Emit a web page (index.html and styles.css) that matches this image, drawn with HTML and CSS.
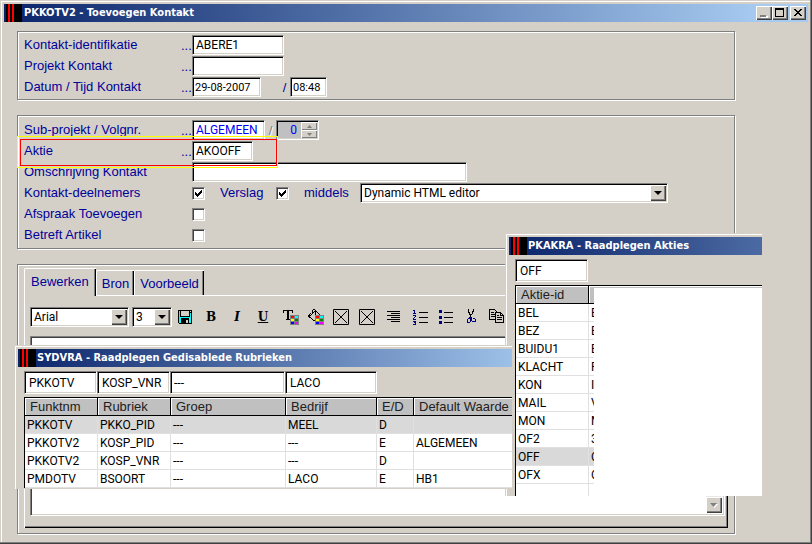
FILE: index.html
```html
<!DOCTYPE html>
<html lang="nl">
<head>
    <meta charset="UTF-8">
    <meta name="viewport" content="width=device-width, initial-scale=1.0">
    <title>PKKOTV2 - Toevoegen Kontakt</title>
    <link rel="stylesheet" href="styles.css">
</head>
<body>
    <div class="window">
        <div class="titlebar">
            <span class="app-icon"></span>
            <span class="title">PKKOTV2 - Toevoegen Kontakt</span>
            <div class="window-buttons">
                <button type="button" class="win-btn" aria-label="Minimize">
                    <svg width="12" height="11" shape-rendering="crispEdges"><path fill="#fff" d="M3 9h7v2H3z"/><path fill="#808080" d="M2 8h6v2H2z"/></svg>
                </button>
                <button type="button" class="win-btn" aria-label="Maximize">
                    <svg width="12" height="11" shape-rendering="crispEdges"><path d="M1 1h9v9H1zM2 3v6h7V3z" fill-rule="evenodd"/></svg>
                </button>
                <button type="button" class="win-btn close" aria-label="Close">
                    <svg width="12" height="11" shape-rendering="crispEdges"><path d="M2 2h2v1h1v1h2V3h1V2h2v1H9v1H8v1H7v1h1v1h1v1h1v1H8V8H7V7H5v1H4v1H2V8h1V7h1V6h1V5H4V4H3V3H2z"/></svg>
                </button>
            </div>
        </div>

        <form class="content">
            <!-- Contact -->
            <div class="group">
                <div class="row">
                    <label for="kontakt">Kontakt-identifikatie</label><span class="dots">...</span>
                    <input type="text" id="kontakt" class="field w-id" value="ABERE1">
                </div>
                <div class="row">
                    <label for="projekt">Projekt Kontakt</label><span class="dots">...</span>
                    <input type="text" id="projekt" class="field w-id">
                </div>
                <div class="row">
                    <label for="datum">Datum / Tijd Kontakt</label><span class="dots">...</span>
                    <input type="text" id="datum" class="field small w-date" value="29-08-2007">
                    <span class="slash wide">/</span>
                    <input type="text" class="field small w-time" value="08:48" aria-label="Tijd">
                </div>
            </div>

            <!-- Action -->
            <div class="group action">
                <div class="row">
                    <label for="subprojekt">Sub-projekt / Volgnr.</label><span class="dots">...</span>
                    <input type="text" id="subprojekt" class="field blue w-sub" value="ALGEMEEN">
                    <span class="slash disabled">/</span>
                    <span class="spinner">
                        <input type="text" class="spin-value" value="0" aria-label="Volgnr.">
                        <span class="spin-buttons">
                            <button type="button" class="spin-btn" aria-label="Omhoog"><svg width="5" height="3"><path fill="#808080" d="M0 3h5L2.5 0z"/></svg></button>
                            <button type="button" class="spin-btn" aria-label="Omlaag"><svg width="5" height="3"><path fill="#808080" d="M0 0h5L2.5 3z"/></svg></button>
                        </span>
                    </span>
                </div>
                <div class="row marked">
                    <label for="aktie">Aktie</label><span class="dots">...</span>
                    <input type="text" id="aktie" class="field w-aktie" value="AKOOFF">
                    <span class="marker"></span>
                </div>
                <div class="row">
                    <label for="omschrijving">Omschrijving Kontakt</label><span class="dots"></span>
                    <input type="text" id="omschrijving" class="field w-desc">
                </div>
                <div class="row">
                    <label for="deelnemers">Kontakt-deelnemers</label><span class="dots"></span>
                    <input type="checkbox" id="deelnemers" class="check" checked>
                    <label for="verslag" class="inline">Verslag</label>
                    <input type="checkbox" id="verslag" class="check" checked>
                    <label for="middels" class="inline">middels</label>
                    <span class="combo w-editor">
                        <select id="middels"><option>Dynamic HTML editor</option></select>
                        <span class="arrow"></span>
                    </span>
                </div>
                <div class="row">
                    <label for="afspraak">Afspraak Toevoegen</label><span class="dots"></span>
                    <input type="checkbox" id="afspraak" class="check">
                </div>
                <div class="row">
                    <label for="artikel">Betreft Artikel</label><span class="dots"></span>
                    <input type="checkbox" id="artikel" class="check">
                </div>
            </div>

            <!-- HTML editor -->
            <div class="group editor-group">
                <div class="tabs">
                    <button type="button" class="tab active">Bewerken</button>
                    <button type="button" class="tab">Bron</button>
                    <button type="button" class="tab">Voorbeeld</button>
                </div>
                <div class="tab-page">
                    <div class="toolbar">
                        <span class="combo w-font">
                            <select aria-label="Lettertype"><option>Arial</option></select>
                            <span class="arrow"></span>
                        </span>
                        <span class="combo w-size">
                            <select aria-label="Grootte"><option>3</option></select>
                            <span class="arrow"></span>
                        </span>
                        <div class="tools">
                            <button type="button" class="tool" aria-label="Opslaan">
                                <svg width="16" height="16" shape-rendering="crispEdges"><path d="M1 1h14v14H2v-1H1z"/><path fill="#0ff" d="M2 2h1v12H2zM13 4h1v10h-1zM3 8h10v1H3zM3 9h1v5H3zM12 9h1v5h-1z"/><path fill="#d4d0c8" d="M4 2h8v5H4zM13 2h1v1h-1zM9 11h2v3H9z"/></svg>
                            </button>
                            <button type="button" class="tool letter" aria-label="Vet">B</button>
                            <button type="button" class="tool letter italic" aria-label="Cursief">I</button>
                            <button type="button" class="tool letter underline" aria-label="Onderstrepen">U</button>
                            <button type="button" class="tool" aria-label="Tekstkleur">
                                <svg width="18" height="16" shape-rendering="crispEdges"><path d="M2 1h10v3h-1V2H8v8h1v1H5v-1h1V2H3v2H2z"/><path fill="#808080" d="M9 6h9v10H9z"/><path fill="red" d="M10 7h3v2h-3z"/><path fill="#0ff" d="M14 7h3v2h-3z"/><path fill="#ff0" d="M10 10h3v2h-3z"/><path fill="green" d="M14 10h3v2h-3z"/><path fill="#00f" d="M10 13h3v2h-3z"/><path fill="#f0f" d="M14 13h3v2h-3z"/></svg>
                            </button>
                            <button type="button" class="tool" aria-label="Achtergrondkleur">
                                <svg width="18" height="16" shape-rendering="crispEdges"><path d="M6 0h2v1H6zM5 1h1v3H5zM8 1h1v5H8zM7 2h1v1H7zM6 3h1v1H6zM5 4h1v1H5zM4 5h1v1H4zM3 6h1v1H3zM2 5h1v4H2zM3 4h1v1H3zM1 6h1v2H1zM3 8h1v1H3zM4 9h1v1H4zM5 10h1v1H5zM6 11h2v1H6zM8 10h1v1H8zM9 2h1v1H9zM10 3h1v1h-1zM11 4h1v1h-1zM12 5h1v1h-1z"/><path fill="#808080" d="M8 6h9v10H8z"/><path fill="red" d="M9 7h3v2H9z"/><path fill="#0ff" d="M13 7h3v2h-3z"/><path fill="#ff0" d="M9 10h3v2H9z"/><path fill="green" d="M13 10h3v2h-3z"/><path fill="#00f" d="M9 13h3v2H9z"/><path fill="#f0f" d="M13 13h3v2h-3z"/></svg>
                            </button>
                            <button type="button" class="tool" aria-label="Afbeelding">
                                <svg width="16" height="16"><path fill="none" stroke="#000" d="M.5.5h15v15H.5zM2 2l12 12M14 2L2 14"/></svg>
                            </button>
                            <button type="button" class="tool" aria-label="Koppeling">
                                <svg width="16" height="16"><path fill="none" stroke="#000" d="M.5.5h15v15H.5zM2 2l12 12M14 2L2 14"/></svg>
                            </button>
                            <button type="button" class="tool" aria-label="Inspringen">
                                <svg width="16" height="16" shape-rendering="crispEdges"><path d="M2 2h13v1H2zM6 4h9v1H6zM2 6h13v1H2zM6 8h9v1H6zM2 10h13v1H2zM6 12h9v1H6z"/></svg>
                            </button>
                            <button type="button" class="tool" aria-label="Nummering">
                                <svg width="18" height="16" shape-rendering="crispEdges"><path d="M8 3h9v1H8zM8 8h9v1H8zM8 13h9v1H8z"/><path fill="#000080" d="M3 1h1v3h1v1H2V4h1V2H2V1zM2 6h3v2H4v1H3v1h2v1H2V9h1V8h1V7H2zM2 12h3v4H2v-1h2v-1H3v-1H2z"/></svg>
                            </button>
                            <button type="button" class="tool" aria-label="Opsomming">
                                <svg width="18" height="16" shape-rendering="crispEdges"><path d="M7 3h9v1H7zM7 8h9v1H7zM7 13h9v1H7z"/><path fill="#000080" d="M2 1h3v3H2zM2 7h3v3H2zM2 12h3v3H2z"/></svg>
                            </button>
                            <button type="button" class="tool" aria-label="Knippen">
                                <svg width="16" height="16" shape-rendering="crispEdges"><path d="M5 0h1v3h1v2h1v1h1V5h1V3h1V0h-1v2H9v3H8v3h1v1H7V6H6V4H5z"/><path fill="none" stroke="#000080" d="M7.500 8.500v4l-1 1h-2v-3l1-1zM8.500 8.500v3l1 1h3v-2l-1-1h-2"/></svg>
                            </button>
                            <button type="button" class="tool" aria-label="Kopiëren">
                                <svg width="16" height="16" shape-rendering="crispEdges"><path fill="#d4d0c8" stroke="#000" d="M.5.5h5l3 3v7h-8z"/><path stroke="#000" d="M2 3.500h3M2 5.500h5M2 7.500h5"/><path fill="#d4d0c8" stroke="#000" d="M6.500 3.500h5l3 3v7h-8zM11.500 3.500v3h3"/><path stroke="#000" d="M8 6.500h2M8 8.500h5M8 10.500h5"/></svg>
                            </button>
                        </div>
                    </div>
                    <div class="editor">
                        <textarea aria-label="Tekst"></textarea>
                        <div class="scrollbar">
                            <button type="button" class="scroll-btn" aria-label="Omlaag"><svg width="8" height="5"><path fill="#fff" d="M1 1h7L4.500 5z"/><path fill="#808080" d="M0 0h7L3.500 4z"/></svg></button>
                        </div>
                    </div>
                </div>
            </div>
        </form>

        <!-- Lookup window: actions -->
        <div class="popup akties">
            <div class="titlebar">
                <span class="app-icon"></span>
                <span class="title">PKAKRA - Raadplegen Akties</span>
            </div>
            <div class="filters">
                <input type="text" class="field filter w-col" value="OFF" aria-label="Aktie-id">
            </div>
            <table class="grid">
                <colgroup><col class="w-col"><col></colgroup>
                <thead><tr><th>Aktie-id</th><th></th></tr></thead>
                <tbody>
                    <tr><td>BEL</td><td>E</td></tr>
                    <tr><td>BEZ</td><td>E</td></tr>
                    <tr><td>BUIDU1</td><td>E</td></tr>
                    <tr><td>KLACHT</td><td>F</td></tr>
                    <tr><td>KON</td><td>I</td></tr>
                    <tr><td>MAIL</td><td>V</td></tr>
                    <tr><td>MON</td><td>M</td></tr>
                    <tr><td>OF2</td><td>3</td></tr>
                    <tr class="selected"><td>OFF</td><td>O</td></tr>
                    <tr><td>OFX</td><td>O</td></tr>
                    <tr><td></td><td></td></tr>
                </tbody>
            </table>
            <div class="blank"></div>
        </div>

        <!-- Lookup window: disabled fields -->
        <div class="popup rubrieken">
            <div class="titlebar">
                <span class="app-icon"></span>
                <span class="title">SYDVRA - Raadplegen Gedisablede Rubrieken</span>
            </div>
            <div class="filters">
                <input type="text" class="field filter w-col" value="PKKOTV" aria-label="Funktnm">
                <input type="text" class="field filter w-col" value="KOSP_VNR" aria-label="Rubriek">
                <input type="text" class="field filter tight w-groep" value="---" aria-label="Groep">
                <input type="text" class="field filter w-id" value="LACO" aria-label="Bedrijf">
            </div>
            <table class="grid">
                <colgroup><col class="w-col"><col class="w-col"><col class="w-groep"><col class="w-bedrijf"><col class="w-ed"><col></colgroup>
                <thead>
                    <tr><th>Funktnm</th><th>Rubriek</th><th>Groep</th><th>Bedrijf</th><th>E/D</th><th>Default Waarde</th></tr>
                </thead>
                <tbody>
                    <tr class="selected"><td>PKKOTV</td><td>PKKO_PID</td><td>---</td><td>MEEL</td><td>D</td><td></td></tr>
                    <tr><td>PKKOTV2</td><td>KOSP_PID</td><td>---</td><td>---</td><td>E</td><td>ALGEMEEN</td></tr>
                    <tr><td>PKKOTV2</td><td>KOSP_VNR</td><td>---</td><td>---</td><td>D</td><td></td></tr>
                    <tr><td>PMDOTV</td><td>BSOORT</td><td>---</td><td>LACO</td><td>E</td><td>HB1</td></tr>
                </tbody>
            </table>
        </div>
    </div>
</body>
</html>
```
FILE: styles.css
```css
* {
    box-sizing: border-box;
}

body {
    margin: 0;
    background-color: #d4d0c8;
    color: #000099;
    font-family: "Liberation Sans", Arial, sans-serif;
    font-size: 13px;
}

button, input, select, textarea {
    margin: 0;
    padding: 0;
    border: 0;
    border-radius: 0;
    font: inherit;
    color: #000;
    outline: none;
    appearance: none;
}

svg {
    display: block;
}

.window {
    position: relative;
    display: flex;
    flex-direction: column;
    min-height: 100vh;
    padding: 4px;
    padding-bottom: 2px;
    background: #d4d0c8;
    box-shadow: inset -1px -1px #404040, inset -2px -2px #808080, inset 1px 1px #d4d0c8, inset 2px 2px #fff;
}

/* Title bars */
.titlebar {
    display: flex;
    height: 18px;
    padding: 0 2px;
    background: linear-gradient(to right, #0a246a, #a6caf0 94%);
}

.app-icon {
    width: 16px;
    background: linear-gradient(to right, #000 2px, #f00 2px, #f00 4px, #000 4px, #000 6px, #f00 6px, #f00 8px, #000 8px);
}

.title {
    flex: 1;
    padding-left: 2px;
    color: #fff;
    font-family: "DejaVu Sans Condensed", "Open Sans", sans-serif;
    font-size: 11px;
    font-weight: bold;
    line-height: 18px;
    white-space: nowrap;
}

.window-buttons {
    display: flex;
    padding-top: 2px;
}

.win-btn, .arrow, .scroll-btn {
    display: flex;
    align-items: center;
    justify-content: center;
    background: #d4d0c8;
    box-shadow: inset 1px 1px #fff, inset -1px -1px #404040, inset -2px -2px #808080;
}

.win-btn {
    width: 16px;
    height: 14px;
    padding: 0 2px 1px 1px;
}

.win-btn.close {
    margin-left: 2px;
}

/* Form */
.content {
    display: flex;
    flex: 1;
    flex-direction: column;
    gap: 15px;
    padding: 9px 73px 8px 13px;
}

.group {
    display: flex;
    flex-direction: column;
    gap: 1px;
    padding: 3px 6px 2px;
    border: 1px solid #808080;
    box-shadow: inset 1px 1px #fff, 1px 1px #fff;
}

.group.action {
    padding-top: 4px;
    padding-bottom: 3px;
}

.row {
    display: flex;
    align-items: center;
    height: 20px;
}

.row label {
    width: 157px;
    line-height: 20px;
}

.row label.inline {
    width: 71px;
    padding-left: 15px;
}

.dots {
    width: 11px;
}

.field {
    height: 20px;
    padding: 0 3px;
    border: 1px solid;
    border-color: #808080 #fff #fff #808080;
    background: #fff;
    box-shadow: inset 1px 1px #000, inset -1px -1px #d4d0c8;
    font-family: Roboto, sans-serif;
    font-size: 12px;
}

.field.small {
    padding: 0 2px;
    font-size: 11px;
}

.field.blue {
    color: #0000ff;
}

.w-id { width: 92px; }
.w-date { width: 69px; }
.w-time { width: 37px; }
.w-sub { width: 73px; }
.w-aktie { width: 61px; }
.w-desc { width: 275px; }
.w-editor { width: 308px; }
.w-font { width: 99px; }
.w-size { width: 40px; }
.w-col { width: 73px; }
.w-groep { width: 115px; }
.w-bedrijf { width: 91px; }
.w-ed { width: 37px; }

.slash {
    width: 11px;
    text-align: center;
}

.slash.wide {
    width: 29px;
    padding-left: 18px;
}

.slash.disabled {
    color: #808080;
    text-shadow: 1px 1px #fff;
}

.spinner {
    display: flex;
    width: 43px;
    height: 20px;
    padding: 1px;
    border: 1px solid;
    border-color: #808080 #fff #fff #808080;
    background: #c0c0c0;
    box-shadow: inset 1px 1px #000, inset -1px -1px #d4d0c8;
}

.spin-value {
    flex: 1;
    min-width: 0;
    padding-right: 4px;
    background: none;
    color: #0000ff;
    font-family: Roboto, sans-serif;
    font-size: 12px;
    text-align: right;
}

.spin-buttons {
    display: flex;
    flex-direction: column;
    width: 16px;
}

.spin-btn {
    display: flex;
    flex: 1;
    align-items: center;
    justify-content: center;
    background: #d4d0c8;
    box-shadow: inset 1px 1px #fff, inset -1px -1px #808080;
}

.check {
    width: 13px;
    height: 13px;
    border: 1px solid;
    border-color: #808080 #fff #fff #808080;
    background: #fff;
    box-shadow: inset 1px 1px #404040, inset -1px -1px #d4d0c8;
}

.check:checked {
    background: #fff url("data:image/svg+xml,%3Csvg xmlns='http://www.w3.org/2000/svg' width='7' height='7' shape-rendering='crispEdges'%3E%3Cpath d='M0 2h1v1h1v1h1V3h1V2h1V1h1V0h1v3H6v1H5v1H4v1H3v1H2V6H1V5H0z'/%3E%3C/svg%3E") 2px 2px no-repeat;
}

.combo {
    position: relative;
    display: flex;
    height: 20px;
    padding: 2px;
    border: 1px solid;
    border-color: #808080 #fff #fff #808080;
    background: #fff;
    box-shadow: inset 1px 1px #000, inset -1px -1px #d4d0c8;
}

.combo select {
    flex: 1;
    min-width: 0;
    padding-left: 1px;
    background: #fff;
    font-family: Roboto, sans-serif;
    font-size: 12px;
}

/* Drop-down button on top of the select */
.arrow {
    position: absolute;
    top: 1px;
    right: 1px;
    bottom: 1px;
    width: 16px;
    pointer-events: none;
}

.arrow::before {
    content: "";
    border: 4px solid transparent;
    border-top-color: #000;
    border-bottom: 0;
}

/* Yellow and red frame round the action row */
.marked {
    position: relative;
}

.marker {
    position: absolute;
    top: -5px;
    left: -7px;
    width: 261px;
    height: 32px;
    border: 1px solid #ff0;
    pointer-events: none;
    z-index: 1;
}

.marker::before {
    content: "";
    position: absolute;
    top: 2px;
    right: 0;
    bottom: 1px;
    left: 2px;
    border: 1px solid #f00;
}

/* Editor */
.editor-group {
    flex: 1;
    gap: 0;
    padding-bottom: 5px;
}

.tabs {
    display: flex;
    align-items: flex-end;
    height: 27px;
}

.tab {
    height: 25px;
    padding: 0 5px;
    border-top: 1px solid #fff;
    border-left: 1px solid #fff;
    border-top-left-radius: 2px;
    background: #d4d0c8;
    box-shadow: inset -1px 0 #000, inset -2px 0 #808080;
    color: #000099;
}

.tab.active {
    position: relative;
    height: 28px;
    margin-bottom: -1px;
    padding: 0 7px 2px 6px;
}

.tab-page {
    display: flex;
    flex: 1;
    flex-direction: column;
    gap: 9px;
    padding: 11px 3px 12px 5px;
    border-top: 1px solid #fff;
    border-left: 1px solid #fff;
    box-shadow: inset -1px -1px #000, inset -2px -2px #808080;
}

.toolbar {
    display: flex;
    align-items: center;
    gap: 3px;
}

.tools {
    display: flex;
    gap: 10px;
    padding-left: 2px;
}

.tool {
    width: 16px;
    height: 16px;
    background: none;
}

.tool.letter {
    font-family: "DejaVu Serif", serif;
    font-size: 12px;
    font-weight: bold;
    line-height: 16px;
}

.tool.italic {
    font-style: italic;
}

.tool.underline {
    text-decoration: underline;
}

.editor {
    display: flex;
    flex: 1;
    padding: 2px;
    border: 1px solid;
    border-color: #808080 #fff #fff #808080;
    background: #fff;
    box-shadow: inset 1px 1px #404040, inset -1px -1px #d4d0c8;
}

.editor textarea {
    flex: 1;
    background: #fff;
    resize: none;
}

.scrollbar {
    display: flex;
    flex-direction: column;
    justify-content: flex-end;
    width: 16px;
    background: #eae8e4;
}

.scroll-btn {
    height: 16px;
}

/* Lookup windows */
.popup {
    position: absolute;
    overflow: hidden;
    background: #d4d0c8;
    z-index: 2;
}

.popup.akties {
    top: 233px;
    left: 505px;
    width: 257px;
    height: 263px;
    padding: 4px 0 0 4px;
    box-shadow: inset 1px 1px #d4d0c8, inset 2px 2px #fff;
}

.popup.akties .titlebar {
    background: linear-gradient(to right, #0a246a, #a6caf0 600px);
}

.popup.rubrieken {
    top: 345px;
    left: 15px;
    width: 497px;
    height: 144px;
    padding: 4px 0 0 3px;
    box-shadow: inset 0 1px #d4d0c8, inset 1px 2px #fff;
}

.popup.rubrieken .titlebar {
    background: linear-gradient(to right, #0a246a, #a6caf0 525px);
}

.popup .title {
    padding-left: 1px;
}

.filters {
    display: flex;
    padding: 4px 0 3px 6px;
}

.field.filter {
    height: 23px;
    padding: 0 4px;
}

.field.tight {
    padding: 0 3px;
}

.grid {
    width: calc(100% - 6px);
    margin-left: 6px;
    border-top: 1px solid #000;
    border-left: 1px solid #000;
    border-spacing: 0;
    background: #fff;
    table-layout: fixed;
}

.grid th {
    height: 18px;
    padding: 0 5px;
    border-right: 1px solid #000;
    border-bottom: 1px solid #000;
    background: #c0c0c0;
    box-shadow: inset 1px 1px #fff;
    color: #202020;
    font-weight: normal;
    line-height: 17px;
    text-align: left;
    white-space: nowrap;
}

.grid td {
    height: 18px;
    padding: 2px 2px 0;
    border-right: 1px solid #e0e0e0;
    border-bottom: 1px solid #e0e0e0;
    color: #000;
    font-family: Roboto, sans-serif;
    font-size: 12px;
    line-height: 15px;
    white-space: nowrap;
}

.grid th:last-child, .grid td:last-child {
    border-right: 0;
}

.grid .selected td {
    background: #d9d9d9;
}

/* Hides the description column */
.blank {
    position: absolute;
    top: 55px;
    right: 0;
    bottom: 0;
    left: 89px;
    background: #fff;
}
```
